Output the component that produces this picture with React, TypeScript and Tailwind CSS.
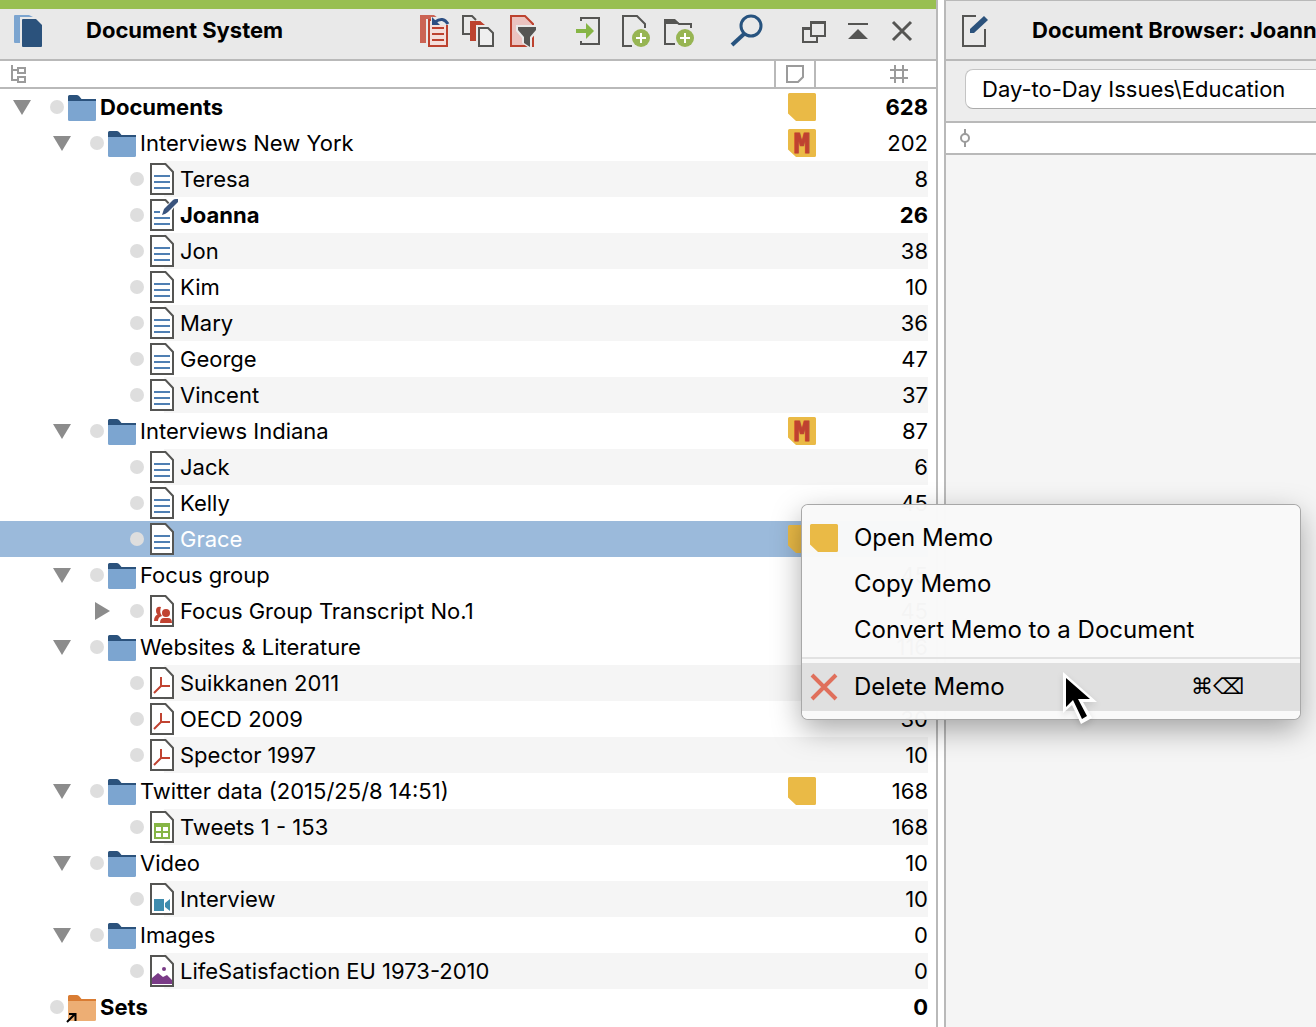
import React from 'react';

const rows = [
  { label: 'Documents', level: 0, icon: 'folder', arrow: 'down', memo: 'plain', count: 628, bold: true },
  { label: 'Interviews New York', level: 1, icon: 'folder', arrow: 'down', memo: 'M', count: 202 },
  { label: 'Teresa', level: 2, icon: 'text', count: 8, striped: true },
  { label: 'Joanna', level: 2, icon: 'edit', count: 26, bold: true },
  { label: 'Jon', level: 2, icon: 'text', count: 38, striped: true },
  { label: 'Kim', level: 2, icon: 'text', count: 10 },
  { label: 'Mary', level: 2, icon: 'text', count: 36, striped: true },
  { label: 'George', level: 2, icon: 'text', count: 47 },
  { label: 'Vincent', level: 2, icon: 'text', count: 37, striped: true },
  { label: 'Interviews Indiana', level: 1, icon: 'folder', arrow: 'down', memo: 'M', count: 87 },
  { label: 'Jack', level: 2, icon: 'text', count: 6, striped: true },
  { label: 'Kelly', level: 2, icon: 'text', count: 45 },
  { label: 'Grace', level: 2, icon: 'text', memo: 'plain', count: 36, selected: true },
  { label: 'Focus group', level: 1, icon: 'folder', arrow: 'down', count: 45 },
  { label: 'Focus Group Transcript No.1', level: 2, icon: 'group', arrow: 'right', count: 45 },
  { label: 'Websites & Literature', level: 1, icon: 'folder', arrow: 'down', count: 116 },
  { label: 'Suikkanen 2011', level: 2, icon: 'pdf', count: 76, striped: true },
  { label: 'OECD 2009', level: 2, icon: 'pdf', count: 30 },
  { label: 'Spector 1997', level: 2, icon: 'pdf', count: 10, striped: true },
  { label: 'Twitter data (2015/25/8 14:51)', level: 1, icon: 'folder', arrow: 'down', memo: 'plain', count: 168 },
  { label: 'Tweets 1 - 153', level: 2, icon: 'table', count: 168, striped: true },
  { label: 'Video', level: 1, icon: 'folder', arrow: 'down', count: 10 },
  { label: 'Interview', level: 2, icon: 'video', count: 10, striped: true },
  { label: 'Images', level: 1, icon: 'folder', arrow: 'down', count: 0 },
  { label: 'LifeSatisfaction EU 1973-2010', level: 2, icon: 'image', count: 0, striped: true },
  { label: 'Sets', level: 0, icon: 'sets', count: 0, bold: true },
];

const indents = ['pl-2.5', 'pl-[50px]', 'pl-[90px]'];

const MemoIcon = ({ letter = false }) => (
  <svg width="28" height="28" viewBox="0 0 28 28" className="shrink-0" aria-hidden="true">
    <path d="M1.500 0h25A1.500 1.500 0 0 1 28 1.500v25a1.500 1.500 0 0 1-1.500 1.500H8L0 20.500V1.500A1.500 1.500 0 0 1 1.500 0z" fill="#eaba46" />
    {letter && (
      <text x="14" y="24" textAnchor="middle" fill="#bf4130" stroke="#bf4130" strokeWidth="1" fontSize="27" fontWeight="700" fontFamily="DejaVu Sans Mono, monospace">M</text>
    )}
  </svg>
);

const FolderIcon = ({ sets = false }) => (
  <svg width="28" height="32" viewBox="0 0 28 32" className="overflow-visible" aria-hidden="true">
    <path d="M0 10V5.500Q0 4 1.500 4H9q1.500 0 2.500 1.500L13.500 8H28v3H0z" fill={sets ? '#d97c33' : '#2b527c'} />
    <path d="M0 10h28v18.500q0 1.500-1.500 1.500h-25Q0 30 0 28.500z" fill={sets ? '#edae74' : '#7ca5d0'} />
    {sets && <path d="M-1 31L7 23M1 23h6.500v7" fill="none" stroke="#000" strokeWidth="2" />}
  </svg>
);

const FileIcon = ({ kind }) => (
  <svg width="28" height="32" viewBox="0 0 28 32" className="relative overflow-visible" aria-hidden="true">
    <path d="M3 1h14.500L25 9v22H3z" fill="#fff" stroke="#555553" strokeWidth="2" />
    {(kind === 'text' || kind === 'edit') && (
      <path d={kind === 'edit' ? 'M6 13h6M6 19h16M6 25h16' : 'M6 13h16M6 19h16M6 25h16'} stroke="#4f7fb3" strokeWidth="2" />
    )}
    {kind === 'edit' && (
      <>
        <path d="M13 17l3-8L26-1l4 3-7 11z" fill="#fff" />
        <path d="M14 16l2-6L25 1q1-1 3-1h2v3L20 13q-2 2-6 3z" fill="#3a547e" />
      </>
    )}
    {kind === 'group' && (
      <g fill="#c14331">
        <path d="M13 12q-5-1-5 4 0 2 1.500 3.500Q6 21 6 26h4q0-4 4-5-3-4-1-9z" />
        <circle cx="18" cy="18" r="4" />
        <path d="M12 28q0-5 4-5h4q4 0 4 5z" />
      </g>
    )}
    {kind === 'pdf' && <path d="M13 10v10M6 26l7-7h9" fill="none" stroke="#c14331" strokeWidth="2" />}
    {kind === 'table' && (
      <>
        <path d="M6 12h16v16H6z" fill="#86b545" />
        <path d="M8 16h5v4H8zM15 16h5v4h-5zM8 22h5v4H8zM15 22h5v4h-5z" fill="#fff" />
      </>
    )}
    {kind === 'video' && <path d="M6 16h10v12H6zM17 20l5-4v12l-5-4z" fill="#3f8cae" />}
    {kind === 'image' && (
      <g fill="#7a3b87">
        <circle cx="16" cy="14" r="2" />
        <path d="M4 23l6-5 5 4 4-2 5 5v4H4z" />
      </g>
    )}
  </svg>
);

const Plus = () => (
  <>
    <circle cx="31" cy="29" r="10.500" fill="#e9e9e9" />
    <circle cx="31" cy="29" r="9" fill="#97b553" />
    <path d="M26 29h10M31 24v10" stroke="#fff" strokeWidth="2" />
  </>
);

const tools = [
  {
    name: 'Reset activations',
    art: (
      <>
        <path d="M8 6h14l4 3v1H14v24H8z" fill="#cb6454" />
        <path d="M17 11h18v26H17z" fill="#f4dfdc" stroke="#bd422f" strokeWidth="2" />
        <path d="M20 19h12M20 25h12M20 31h12" stroke="#bd422f" strokeWidth="2" />
        <path d="M19 8h18v8H19z" fill="#e9e9e9" />
        <path d="M20 8v8h8z" fill="#2d4f83" />
        <path d="M23 13q8-6 13 2" fill="none" stroke="#2d4f83" strokeWidth="3" />
      </>
    ),
  },
  {
    name: 'Activated documents',
    art: (
      <>
        <path d="M14 25H7V7h9l4 4" fill="none" stroke="#555553" strokeWidth="2" />
        <path d="M14 12h10l5 5v1h-8v14h-7z" fill="#bd422f" />
        <path d="M20 16h13l7 7v15H20z" fill="#e9e9e9" />
        <path d="M14 12h10l5 4h-9v16h-6z" fill="#bd422f" />
        <path d="M23 19h9l5 5v13H23z" fill="#efefef" stroke="#555553" strokeWidth="2" />
      </>
    ),
  },
  {
    name: 'Filter documents',
    art: (
      <>
        <path d="M11 7h14l8 8v22H11z" fill="#ebc3c0" stroke="#bd422f" strokeWidth="2" />
        <path d="M16 16h22v6l-6 7v10h-3l-7-5v-5l-6-7z" fill="#e9e9e9" />
        <path d="M32 30h2v8h-2z" fill="#bd422f" />
        <path d="M18 18h18v3l-6 7v10l-6-4v-6l-6-7z" fill="#555553" />
      </>
    ),
  },
  {
    name: 'Import document',
    space: 'ml-[22px]',
    art: (
      <>
        <path d="M15 12V9h18v26H15v-3" fill="none" stroke="#555553" strokeWidth="2" />
        <path d="M10 20h10v-6l8 8-8 8v-6H10z" fill="#86b545" />
      </>
    ),
  },
  {
    name: 'New document',
    art: (
      <>
        <path d="M22 37h-9V7h14l8 8v4" fill="none" stroke="#555553" strokeWidth="2" />
        <Plus />
      </>
    ),
  },
  {
    name: 'New group',
    art: (
      <>
        <path d="M21 35H11V12h10l4 3h12v4" fill="none" stroke="#555553" strokeWidth="2" />
        <path d="M10 10h11l5 5H10z" fill="#555553" />
        <Plus />
      </>
    ),
  },
  {
    name: 'Search',
    space: 'ml-[26px]',
    art: (
      <>
        <circle cx="27" cy="17" r="10" fill="none" stroke="#27537f" strokeWidth="3" />
        <path d="M20 25L8 36" stroke="#27537f" strokeWidth="4" />
      </>
    ),
  },
  {
    name: 'Undock window',
    space: 'ml-6',
    art: (
      <>
        <path d="M10 18h9v3h-7v11h12v-4h2v6H10z" fill="#555553" />
        <path d="M19 13h14v14H19z" fill="none" stroke="#555553" strokeWidth="2" />
        <path d="M18 12h16v3H18z" fill="#555553" />
      </>
    ),
  },
  {
    name: 'Collapse panel',
    art: <path d="M12 14h20v2H12zM22 20l10 10H12z" fill="#555553" />,
  },
  {
    name: 'Close panel',
    art: <path d="M13 13l18 18M31 13L13 31" stroke="#555553" strokeWidth="3" />,
  },
];

const TreeRow = ({ row }) => {
  const bg = row.selected ? 'bg-[#9bbadb]' : row.striped ? 'bg-[#f5f5f5]' : 'bg-white';
  return (
    <tr className={`h-9 ${row.bold ? 'font-bold' : ''} ${row.selected ? 'text-white' : ''}`}>
      <td className={`p-0 ${row.selected ? 'bg-[#9bbadb]' : ''}`}>
        <div className={`flex h-9 items-center ${indents[row.level]}`}>
          {row.arrow ? (
            <button className="h-6 w-6" aria-label={`Toggle ${row.label}`}>
              <svg width="24" height="24" viewBox="0 0 24 24">
                <path d={row.arrow === 'down' ? 'M3 5h18l-9 15z' : 'M5 3l15 9-15 9z'} fill="#8c8c8c" />
              </svg>
            </button>
          ) : (
            <span className="w-6" />
          )}
          <span className="mr-1 ml-4 h-3.5 w-3.5 rounded-full bg-[#dedede]" />
          <span className="relative z-10">
            {row.icon === 'folder' || row.icon === 'sets' ? <FolderIcon sets={row.icon === 'sets'} /> : <FileIcon kind={row.icon} />}
          </span>
          <span className={`-ml-3 flex h-9 grow items-center pl-4 whitespace-nowrap ${bg}`}>{row.label}</span>
        </div>
      </td>
      <td className={`p-0 ${bg}`}>
        <div className="flex justify-end">{row.memo && <MemoIcon letter={row.memo === 'M'} />}</div>
      </td>
      <td className={`border-r-8 border-white bg-clip-padding p-0 text-right ${bg}`}>{row.count}</td>
    </tr>
  );
};

const DocumentSystem = () => (
  <section className="min-w-0 border-r-2 border-[#b9b9b9] bg-white">
    <header className="flex items-start border-t-[9px] border-b-2 border-t-[#98bf52] border-b-[#b9b9b9] bg-[#e9e9e9] pr-3 pl-3.5">
      <svg width="28" height="32" viewBox="0 0 28 32" className="mt-1.5 shrink-0" aria-hidden="true">
        <path d="M1 0h14l4 2H6v26H1q-1 0-1-1V1q0-1 1-1z" fill="#7ca5d0" />
        <path d="M9 4h13l6 6v21q0 1-1 1H9q-1 0-1-1V5q0-1 1-1z" fill="#2b527c" />
      </svg>
      <h1 className="ml-11 leading-[42px] font-bold whitespace-nowrap">Document System</h1>
      <div className="ml-auto flex">
        {tools.map((tool) => (
          <button key={tool.name} aria-label={tool.name} className={`h-[50px] w-11 ${tool.space ?? ''}`}>
            <svg width="44" height="50" viewBox="0 0 44 50">{tool.art}</svg>
          </button>
        ))}
      </div>
    </header>
    <table className="w-full table-fixed border-separate border-spacing-0">
      <thead>
        <tr className="h-7">
          <th className="border-b-2 border-[#b9b9b9] p-0 pl-2.5" aria-label="Name">
            <svg width="16" height="20" viewBox="0 0 16 20" fill="none" stroke="#9b9b9b" strokeWidth="2">
              <path d="M2 1v15h6M2 6h5M8 4h7v5H8zM8 13h7v5H8z" />
            </svg>
          </th>
          <th className="w-[42px] border-x-2 border-b-2 border-[#b9b9b9] p-0" aria-label="Memo">
            <svg width="18" height="18" viewBox="0 0 18 18" className="mx-auto" fill="none" stroke="#9b9b9b" strokeWidth="2">
              <path d="M1 1h16v11l-5 5H1z" />
            </svg>
          </th>
          <th className="w-[120px] border-b-2 border-[#b9b9b9] p-0 pr-7" aria-label="Coded segments">
            <svg width="18" height="18" viewBox="0 0 18 18" className="ml-auto" fill="none" stroke="#9b9b9b" strokeWidth="2">
              <path d="M5 0v18M13 0v18M0 5h18M0 13h18" />
            </svg>
          </th>
        </tr>
      </thead>
      <tbody>
        {rows.map((row) => (
          <TreeRow key={row.label} row={row} />
        ))}
      </tbody>
    </table>
  </section>
);

const DocumentBrowser = () => (
  <section className="min-w-0 overflow-hidden border-l-2 border-[#b9b9b9] bg-[#f5f5f5]">
    <header className="flex h-[61px] items-start border-t border-b-2 border-[#b9b9b9] bg-[#e9e9e9] pt-2 pl-4">
      <svg width="26" height="32" viewBox="0 0 26 32" className="mt-1.5 shrink-0" aria-hidden="true">
        <path d="M14 1H1v30h22V14" fill="none" stroke="#555553" strokeWidth="2" />
        <path d="M8 18v-4L22 1l4 4-14 13z" fill="#2b527c" />
      </svg>
      <h2 className="ml-11 leading-[42px] font-bold whitespace-nowrap">Document Browser: Joanna</h2>
    </header>
    <div className="flex h-[62px] items-start border-b-2 border-[#b9b9b9] bg-[#ededed] pt-2 pl-[19px]">
      <select
        aria-label="Code"
        className="h-10 grow appearance-none rounded-l-lg border border-r-0 border-[#c4c4c4] border-b-[#ababab] bg-white pl-4"
      >
        <option>Day-to-Day Issues\Education</option>
      </select>
    </div>
    <div className="flex h-8 items-center border-b-2 border-[#b9b9b9] bg-white pl-3.5">
      <svg width="10" height="18" viewBox="0 0 10 18" fill="none" stroke="#9b9b9b" strokeWidth="2" aria-hidden="true">
        <circle cx="5" cy="9" r="4" />
        <path d="M5 0v5M5 13v5" />
      </svg>
    </div>
  </section>
);

const MemoMenu = () => (
  <div
    role="menu"
    className="absolute top-[505px] left-[802px] z-20 w-[498px] rounded-md bg-[#f9f9f9]/98 pt-2.5 pb-2 text-2xl shadow-[0_0_0_1px_#a8a8a8,0_10px_30px_rgba(0,0,0,0.35)]"
  >
    <button role="menuitem" className="flex h-[46px] w-full items-center gap-4 pl-2">
      <MemoIcon />
      Open Memo
    </button>
    <button role="menuitem" className="flex h-[46px] w-full items-center pl-[52px]">Copy Memo</button>
    <button role="menuitem" className="flex h-[46px] w-full items-center pl-[52px]">Convert Memo to a Document</button>
    <hr className="my-1 border-t-2 border-[#e2e2e2]" />
    <button role="menuitem" className="flex h-12 w-full items-center gap-4 bg-[#dfdfdf]/98 pr-14 pl-2">
      <svg width="28" height="28" viewBox="0 0 28 28" stroke="#e0705c" strokeWidth="4" aria-hidden="true">
        <path d="M2 2l24 24M26 2L2 26" />
      </svg>
      Delete Memo
      <kbd className="ml-auto font-['DejaVu_Sans'] text-[22px]">⌘⌫</kbd>
    </button>
  </div>
);

const App = () => {
  return (
    <div className="relative grid min-h-screen grid-cols-[minmax(0,938fr)_minmax(0,372fr)] gap-1.5 overflow-hidden bg-white font-['Inter',sans-serif] text-[22px] leading-7 text-black">
      <DocumentSystem />
      <DocumentBrowser />
      <MemoMenu />
      <svg width="40" height="58" viewBox="0 0 40 58" className="pointer-events-none absolute top-[670px] left-[1062px] z-30 drop-shadow-md" aria-hidden="true">
        <path d="M1 2v41l9-8 9 19 11-6-9-16h14z" fill="#fff" />
        <path d="M4 8v29l7-7 9 19 5-3-9-17h12z" fill="#000" />
      </svg>
    </div>
  );
};

export default App;
